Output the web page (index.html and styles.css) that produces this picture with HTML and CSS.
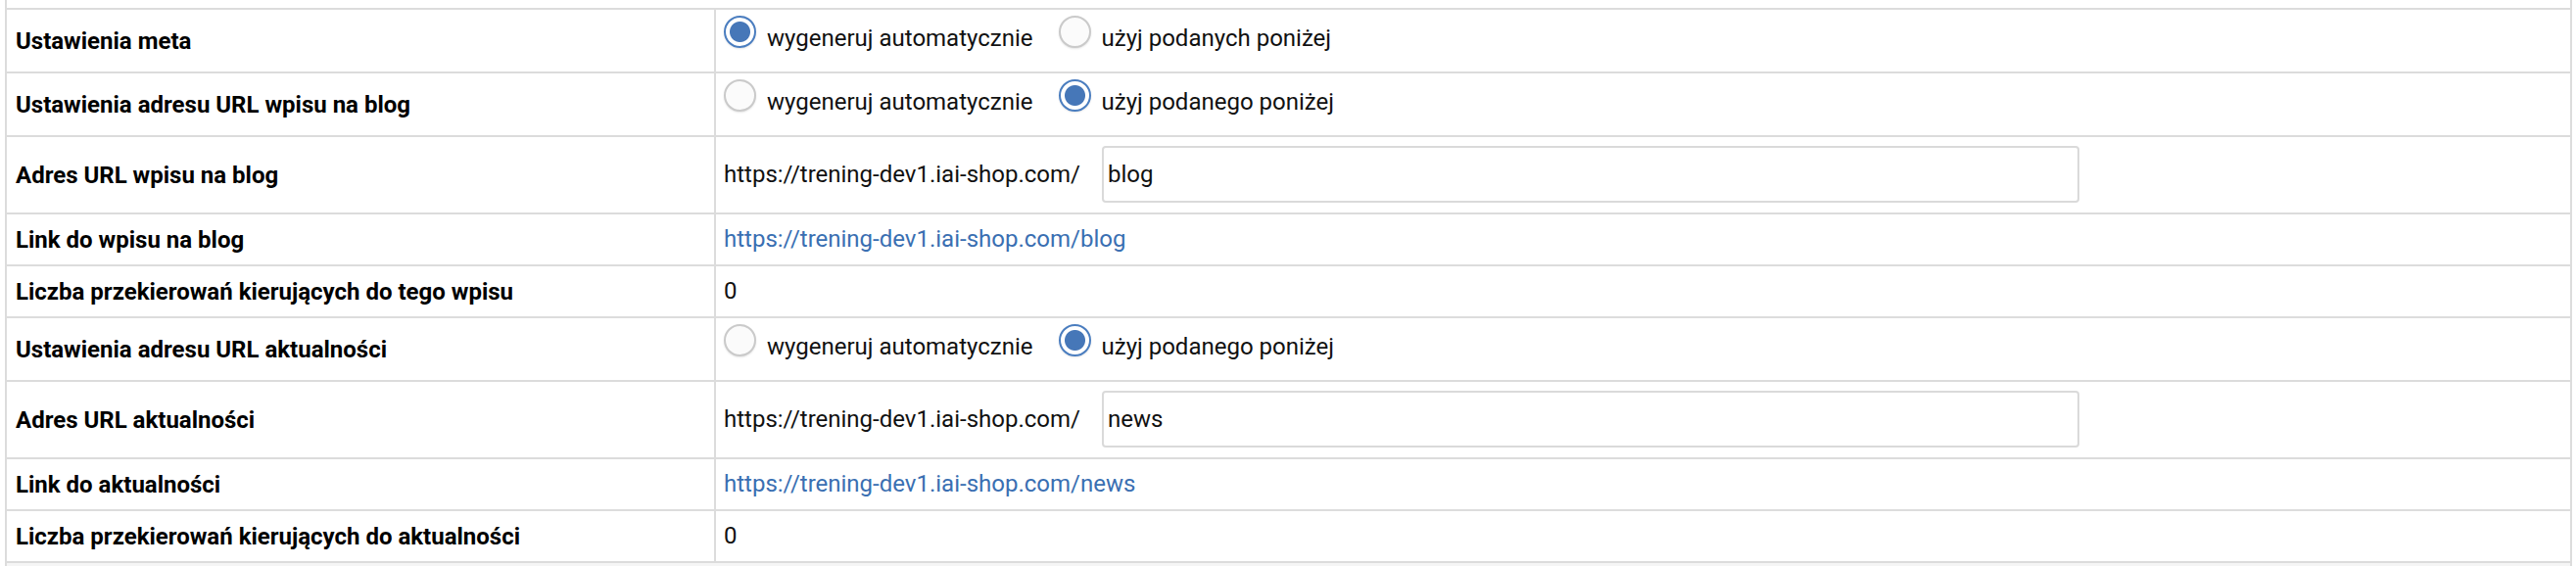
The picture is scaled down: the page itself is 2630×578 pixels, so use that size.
FILE: index.html
```html
<!DOCTYPE html>
<html lang="pl">
<head>
<meta charset="utf-8">
<title>Ustawienia wpisu</title>
<link rel="stylesheet" href="styles.css">
</head>
<body>
<div class="page">
  <table class="form">
    <colgroup><col class="label-col"><col></colgroup>
    <tbody>
      <tr class="cut-row"><td colspan="2"></td></tr>
      <tr class="radio-row">
        <th>Ustawienia meta</th>
        <td>
          <div class="radio-group">
            <label class="choice"><input class="radio" type="radio" name="meta" checked><span class="choice-text">wygeneruj automatycznie</span></label>
            <label class="choice"><input class="radio" type="radio" name="meta"><span class="choice-text">użyj podanych poniżej</span></label>
          </div>
        </td>
      </tr>
      <tr class="radio-row">
        <th>Ustawienia adresu URL wpisu na blog</th>
        <td>
          <div class="radio-group">
            <label class="choice"><input class="radio" type="radio" name="blogurl"><span class="choice-text">wygeneruj automatycznie</span></label>
            <label class="choice"><input class="radio" type="radio" name="blogurl" checked><span class="choice-text">użyj podanego poniżej</span></label>
          </div>
        </td>
      </tr>
      <tr class="input-row">
        <th>Adres URL wpisu na blog</th>
        <td>
          <div class="url-field"><span class="url-prefix">https://trening-dev1.iai-shop.com/</span><input class="text-input" type="text" value="blog"></div>
        </td>
      </tr>
      <tr class="text-row">
        <th>Link do wpisu na blog</th>
        <td><a class="link" href="#">https://trening-dev1.iai-shop.com/blog</a></td>
      </tr>
      <tr class="text-row">
        <th>Liczba przekierowań kierujących do tego wpisu</th>
        <td>0</td>
      </tr>
      <tr class="radio-row">
        <th>Ustawienia adresu URL aktualności</th>
        <td>
          <div class="radio-group">
            <label class="choice"><input class="radio" type="radio" name="newsurl"><span class="choice-text">wygeneruj automatycznie</span></label>
            <label class="choice"><input class="radio" type="radio" name="newsurl" checked><span class="choice-text">użyj podanego poniżej</span></label>
          </div>
        </td>
      </tr>
      <tr class="input-row">
        <th>Adres URL aktualności</th>
        <td>
          <div class="url-field"><span class="url-prefix">https://trening-dev1.iai-shop.com/</span><input class="text-input" type="text" value="news"></div>
        </td>
      </tr>
      <tr class="text-row">
        <th>Link do aktualności</th>
        <td><a class="link" href="#">https://trening-dev1.iai-shop.com/news</a></td>
      </tr>
      <tr class="text-row">
        <th>Liczba przekierowań kierujących do aktualności</th>
        <td>0</td>
      </tr>
      <tr class="foot-row"><td colspan="2"></td></tr>
    </tbody>
  </table>
</div>
</body>
</html>
```

FILE: styles.css
```css
html, body {
  margin: 0;
  padding: 0;
  background: #fff;
}

body {
  font-family: Roboto, "Liberation Sans", Arial, sans-serif;
  color: #111;
  overflow: hidden;
}

.page {
  padding: 0 4px 0 5px;
}

.form {
  width: 100%;
  border-collapse: collapse;
  table-layout: fixed;
}

.form .label-col {
  width: 724px;
}

.form th,
.form td {
  border: 2px solid #dcdcdc;
  font-size: 24px;
  line-height: 28px;
}

.form th {
  text-align: left;
  font-weight: 700;
  color: #000;
  padding: 0 9px;
  vertical-align: middle;
  white-space: nowrap;
}

.form td {
  padding: 11px 8px 12px;
  vertical-align: middle;
}

.cut-row td {
  border-top: 0;
  height: 8px;
  padding: 0;
}

.foot-row td {
  background: #f5f5f5;
  height: 20px;
  padding: 0;
}

/* radio rows */
.radio-row td {
  padding: 6px 8px 20px;
  vertical-align: top;
}

.radio-group {
  display: flex;
  align-items: flex-start;
  height: 37px;
}

.choice {
  display: flex;
  align-items: flex-start;
  gap: 11px;
  margin-right: 26px;
  cursor: pointer;
}

.choice-text {
  margin-top: 9px;
}

.radio {
  -webkit-appearance: none;
  appearance: none;
  flex: none;
  margin: 0;
  width: 33px;
  height: 33px;
  border-radius: 50%;
  border: 2px solid #cacaca;
  background: #fbfbfb;
  box-shadow: 0 1px 2px rgba(0, 0, 0, 0.1);
}

.radio:checked {
  border-color: #4a7dbf;
  background: radial-gradient(circle, #4677b8 0, #4677b8 10px, #ffffff 11px);
}

/* input rows */
.input-row td {
  padding: 9px 8px 10px;
}

.url-field {
  display: flex;
  align-items: center;
  gap: 22px;
}

.text-input {
  box-sizing: border-box;
  width: 998px;
  height: 58px;
  margin: 0;
  padding: 0 4px;
  border: 2px solid #dadada;
  border-radius: 4px;
  font-family: Roboto, "Liberation Sans", Arial, sans-serif;
  font-size: 24px;
  color: #111;
  background: #fff;
}

.link {
  color: #3a6fb2;
  text-decoration: none;
}
```
